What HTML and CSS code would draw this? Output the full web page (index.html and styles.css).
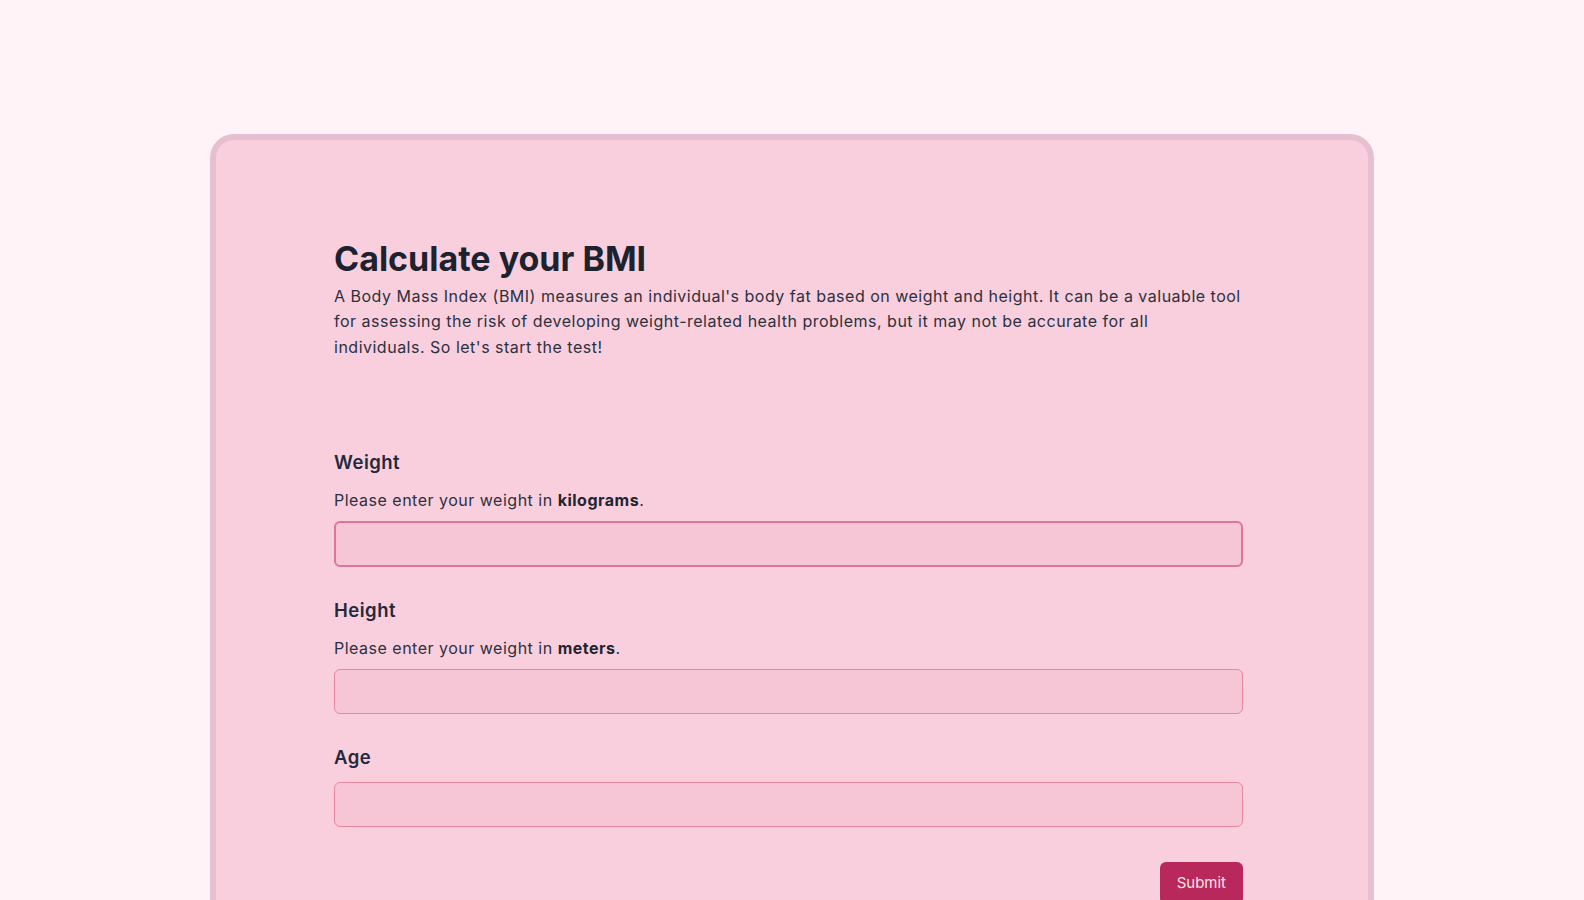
FILE: index.html
```html
<!DOCTYPE html>
<html lang="en">
<head>
<meta charset="utf-8">
<title>Calculate your BMI</title>
<link rel="stylesheet" href="styles.css">
</head>
<body>
<main class="page">
  <section class="card">
    <div class="content">
      <header class="intro">
        <h1 class="title">Calculate your BMI</h1>
        <p class="lead">A Body Mass Index (BMI) measures an individual's body fat based on weight and height. It can be a valuable tool for assessing the risk of developing weight-related health problems, but it may not be accurate for all individuals. So let's start the test!</p>
      </header>
      <form class="form">
        <div class="field">
          <label class="label" for="weight">Weight</label>
          <p class="hint">Please enter your weight in <strong>kilograms</strong>.</p>
          <input class="input input-focus" id="weight" type="text">
        </div>
        <div class="field">
          <label class="label" for="height">Height</label>
          <p class="hint">Please enter your weight in <strong>meters</strong>.</p>
          <input class="input" id="height" type="text">
        </div>
        <div class="field field-plain">
          <label class="label" for="age">Age</label>
          <input class="input" id="age" type="text">
        </div>
        <div class="actions">
          <button class="submit" type="button">Submit</button>
        </div>
      </form>
    </div>
  </section>
</main>
</body>
</html>
```
FILE: styles.css
```css
* { box-sizing: border-box; }
html, body { margin: 0; padding: 0; }
body {
  background: #fff3f7;
  font-family: Inter, "Noto Sans", "Liberation Sans", sans-serif;
  color: #1e2430;
  height: 900px;
  overflow: hidden;
}
.page {
  padding: 134px 210px 0;
}
.card {
  background: #f9cfde;
  border: 6px solid #e6bfd1;
  border-bottom: none;
  border-radius: 24px 24px 0 0;
  min-height: 800px;
  padding: 99px 125px 0 118px;
}
.content {
  display: flex;
  flex-direction: column;
}
.title {
  margin: 0;
  font-size: 34px;
  line-height: 40px;
  font-weight: 700;
  color: #1c222e;
  letter-spacing: 0;
}
.lead {
  margin: 5px 0 0;
  font-size: 16px;
  line-height: 25.3px;
  letter-spacing: 0.5px;
  color: #2b313d;
}
.form {
  margin-top: 88px;
  display: flex;
  flex-direction: column;
  gap: 29px;
}
.field {
  display: flex;
  flex-direction: column;
}
.label {
  font-size: 18.5px;
  line-height: 28px;
  font-weight: 600;
  letter-spacing: 0.5px;
  color: #23293a;
  margin-bottom: 12px;
}
.field-plain .label {
  margin-bottom: 11px;
}
.hint {
  margin: 0 0 9px;
  font-size: 16px;
  line-height: 24px;
  letter-spacing: 0.5px;
  color: #2b313d;
}
.hint strong { font-weight: 700; color: #1e2430; }
.input {
  height: 45px;
  width: 100%;
  background: #f6c5d6;
  border: 1px solid #e7879f;
  border-radius: 6px;
  font: inherit;
  outline: none;
}
.input-focus {
  height: 46px;
  border: 2px solid #de7598;
}
.actions {
  display: flex;
  justify-content: flex-end;
  margin-top: 6px;
}
.submit {
  background: #b9285a;
  color: #fbe3ec;
  border: none;
  border-radius: 6px;
  height: 42px;
  padding: 0 17px;
  font-family: Inter, "Noto Sans", sans-serif;
  font-size: 15px;
  line-height: 20px;
  letter-spacing: 0;
}
```
